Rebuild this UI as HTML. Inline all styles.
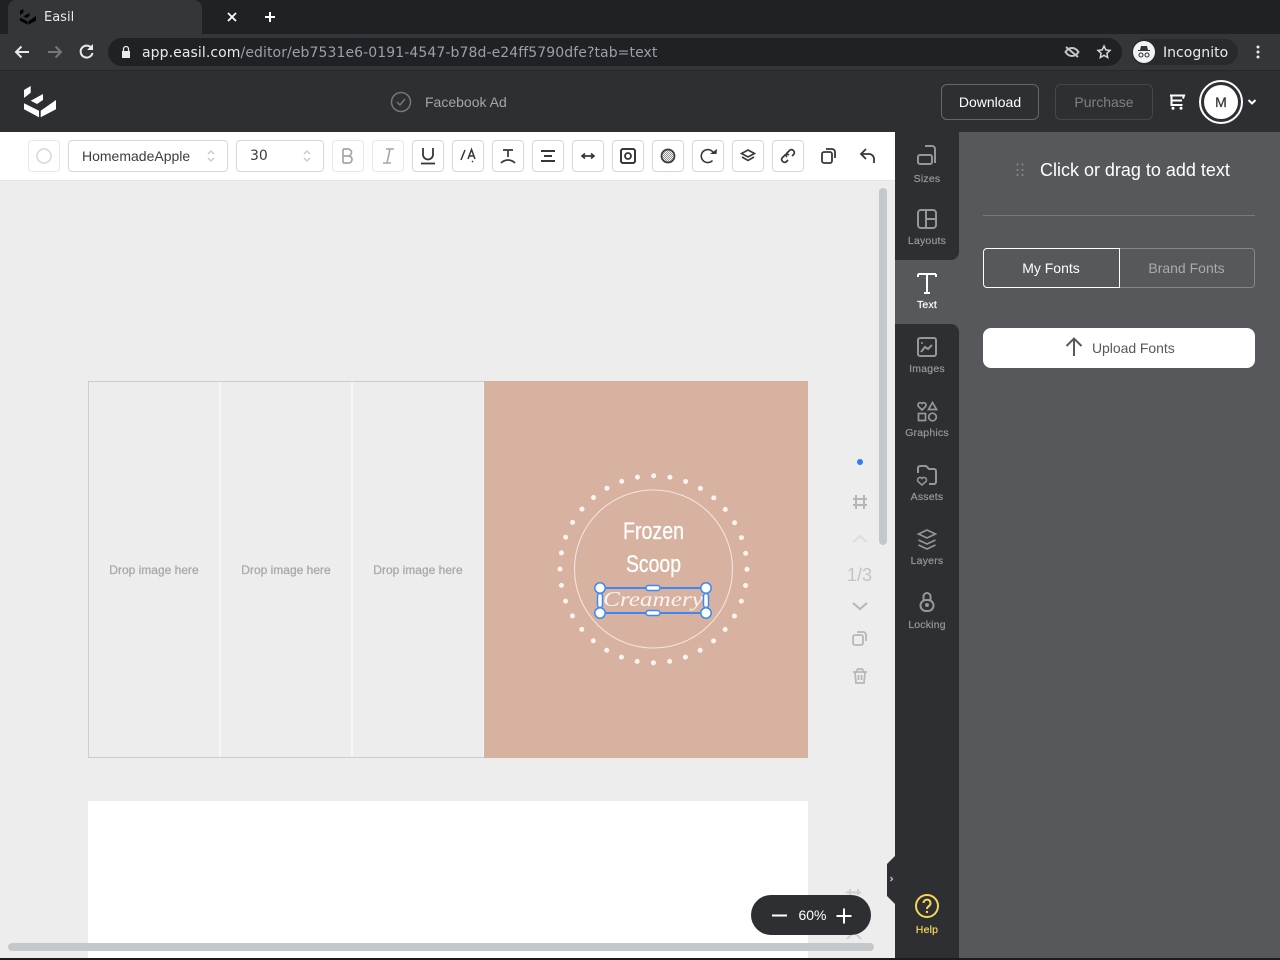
<!DOCTYPE html>
<html lang="en"><head><meta charset="utf-8"><title>Easil</title>
<style>
html,body{margin:0;padding:0;width:1280px;height:960px;overflow:hidden;background:#ededed}
body{position:relative;font-family:"Liberation Sans",Arial,sans-serif}
.b{position:absolute}
.t{position:absolute;white-space:nowrap;line-height:20px;height:20px}
.c{text-align:center}
.d{font-family:"DejaVu Sans",sans-serif}
.btn{position:absolute;top:140px;width:30px;height:30px;border:1px solid #d5d6d8;border-radius:4px;background:#fff}
.btn.o{border-color:#e6e6e6}
.side{font-size:10.5px;color:#96979b;width:64px;left:895px;text-align:center;letter-spacing:.2px;-webkit-text-stroke:.2px currentColor}
.drop{font-size:12px;color:#a9a9a9;top:560px;width:130px;text-align:center;-webkit-text-stroke:.3px #a9a9a9}
svg{position:absolute;left:0;top:0;overflow:visible}
</style></head><body>
<!-- chrome -->
<div class="b" style="left:0;top:0;width:1280px;height:34px;background:#202124"></div>
<div class="b" style="left:8px;top:0;width:194px;height:34px;background:#35363a;border-radius:8px 8px 0 0"></div>
<div class="b" style="left:0;top:34px;width:1280px;height:36px;background:#35363a"></div>
<div class="b" style="left:0;top:70px;width:1280px;height:1px;background:#26272a"></div>
<div class="b" style="left:108px;top:38px;width:1014px;height:28px;background:#202124;border-radius:14px"></div>
<div class="b" style="left:1132px;top:39px;width:106px;height:26px;background:#292a2d;border-radius:13px"></div>
<!-- header -->
<div class="b" style="left:0;top:71px;width:1280px;height:61px;background:#2e2f32"></div>
<div class="b" style="left:941px;top:84px;width:96px;height:34px;border:1px solid #66676b;border-radius:6px"></div>
<div class="b" style="left:1055px;top:84px;width:96px;height:34px;border:1px solid #46474b;border-radius:6px"></div>
<div class="b" style="left:1199px;top:80px;width:40px;height:40px;border:2px solid #fff;border-radius:50%;background:#2e2f32"></div>
<div class="b" style="left:1204px;top:85px;width:34px;height:34px;background:#fff;border-radius:50%"></div>
<!-- toolbar -->
<div class="b" style="left:0;top:132px;width:895px;height:48px;background:#fff"></div>
<div class="b" style="left:0;top:180px;width:895px;height:1px;background:#e6e6e6"></div>
<div class="btn o" style="left:28px"></div>
<div class="btn" style="left:68px;width:158px"></div>
<div class="btn" style="left:236px;width:86px"></div>
<div class="btn o" style="left:332px"></div>
<div class="btn o" style="left:372px"></div>
<div class="btn" style="left:412px"></div>
<div class="btn" style="left:452px"></div>
<div class="btn" style="left:492px"></div>
<div class="btn" style="left:532px"></div>
<div class="btn" style="left:572px"></div>
<div class="btn" style="left:612px"></div>
<div class="btn" style="left:652px"></div>
<div class="btn" style="left:692px"></div>
<div class="btn" style="left:732px"></div>
<div class="btn" style="left:772px"></div>
<!-- canvas -->
<div class="b" style="left:88px;top:381px;width:718px;height:375px;border:1px solid #cdcdcd;background:#ededed"></div>
<div class="b" style="left:219px;top:382px;width:2px;height:375px;background:#f7f7f7"></div>
<div class="b" style="left:351px;top:382px;width:2px;height:375px;background:#f7f7f7"></div>
<div class="b" style="left:483px;top:382px;width:1px;height:375px;background:#f7f7f7"></div>
<div class="b" style="left:484px;top:381px;width:324px;height:377px;background:#d8b2a0"></div>
<div class="t drop" style="left:89px;top:560px">Drop image here</div>
<div class="t drop" style="left:221px;top:560px">Drop image here</div>
<div class="t drop" style="left:353px;top:560px">Drop image here</div>
<div class="b" style="left:88px;top:801px;width:720px;height:157px;background:#fff"></div>
<div class="b" style="left:879px;top:188px;width:8px;height:357px;background:#c4c8cb;border-radius:4px"></div>
<div class="b" style="left:8px;top:943px;width:866px;height:8px;background:#c4c8cb;border-radius:4px"></div>
<!-- sidebar -->
<div class="b" style="left:895px;top:132px;width:64px;height:828px;background:#57585c"></div>
<div class="b" style="left:895px;top:132px;width:64px;height:128px;background:#2e2f33;border-radius:0 0 8px 0"></div>
<div class="b" style="left:895px;top:324px;width:64px;height:636px;background:#2e2f33;border-radius:0 8px 0 0"></div>
<div class="b" style="left:959px;top:132px;width:321px;height:828px;background:#57585c"></div>
<div class="b" style="left:983px;top:215px;width:272px;height:1px;background:#77787c"></div>
<div class="b" style="left:1120px;top:248px;width:134px;height:38px;border:1px solid #85868a;border-left:0;border-radius:0 4px 4px 0"></div>
<div class="b" style="left:983px;top:248px;width:135px;height:38px;border:1px solid #fff;border-radius:4px 0 0 4px"></div>
<div class="b" style="left:983px;top:328px;width:272px;height:40px;background:#fff;border-radius:8px"></div>
<svg width="1280" height="960" viewBox="0 0 1280 960" fill="none">
 <!-- hidden behind zoom pill -->
 <path d="M850 889v6M858 889v6M846 892.500h15" stroke="#cfd0d2" stroke-width="2"/>
 <path d="M847 939l7-7 7 7" stroke="#cfd0d2" stroke-width="2"/>
</svg>
<div class="b" style="left:751px;top:895px;width:120px;height:40px;background:#2e2f33;border-radius:20px"></div>
<div class="b" style="left:0;top:958px;width:1280px;height:2px;background:#1c1c1e"></div>

<svg width="1280" height="960" viewBox="0 0 1280 960" fill="none">
 <defs><pattern id="chk" width="2" height="2" patternUnits="userSpaceOnUse"><rect width="2" height="2" fill="#efefef"/><rect width="1" height="1" fill="#999"/><rect x="1" y="1" width="1" height="1" fill="#999"/></pattern></defs>
 <!-- favicon -->
 <g fill="#000" transform="translate(8,-34) scale(.5)"><path d="M24 90l6.700-4v6.700L24 98zM30.700 100.700L43 94v6l-6 4zM24 103.300l15 7.400v6.600l-15-8zM40.700 110.700L56 100v9.300l-15.300 8z"/></g>
 <g stroke="#fff" stroke-width="2"><path d="M228 13l8 8M236 13l-8 8" stroke-width="1.800"/><path d="M265 17h10M270 12v10"/></g>
 <!-- nav -->
 <path d="M29 52H16M21.500 46.500L16 52l5.500 5.500" stroke="#e8eaed" stroke-width="2"/>
 <path d="M48 52h13M55.500 46.500L61 52l-5.500 5.500" stroke="#76787c" stroke-width="2"/>
 <path d="M91.500 48a6 6 0 1 0 1 5" stroke="#e8eaed" stroke-width="2"/><path d="M93 44v6h-6z" fill="#e8eaed"/>
 <path d="M122 51h8v7h-8z" fill="#e8eaed"/><path d="M123.500 51v-2a2.500 2.500 0 0 1 5 0v2" stroke="#e8eaed" stroke-width="1.300"/>
 <path d="M1066 47l12 10M1065.500 52c2-3 4-4 6.500-4s4.500 1 6.500 4c-2 3-4 4-6.500 4s-4.500-1-6.500-4z" stroke="#c4c6c9" stroke-width="2"/>
 <path d="M1104 46l1.800 3.900 4.200.5-3.100 2.900.8 4.200-3.700-2.100-3.700 2.100.8-4.200-3.100-2.900 4.200-.5z" stroke="#d4d6d9" stroke-width="1.500"/>
 <circle cx="1144" cy="52" r="11" fill="#f1f3f4"/>
 <path d="M1138 50h12v1h-12zM1140 50l1-4h6l1 4z" fill="#35363a"/><circle cx="1141" cy="55" r="2" stroke="#35363a" stroke-width="1.100"/><circle cx="1147" cy="55" r="2" stroke="#35363a" stroke-width="1.100"/>
 <g fill="#e8eaed"><circle cx="1258" cy="47" r="1.500"/><circle cx="1258" cy="52" r="1.500"/><circle cx="1258" cy="57" r="1.500"/></g>
 <!-- logo -->
 <g fill="#fff"><path d="M24 90l6.700-4v6.700L24 98zM30.700 100.700L43 94v6l-6 4zM24 103.300l15 7.400v6.600l-15-8zM40.700 110.700L56 100v9.300l-15.300 8z"/></g>
 <circle cx="401" cy="102" r="9.500" stroke="#75767a" stroke-width="1.500"/><path d="M397 102l3 3 5-6" stroke="#75767a" stroke-width="1.500"/>
 <!-- cart -->
 <path d="M1170 95.500h14l-1 3M1171.500 95.500v9.500h11M1171.500 100.500h10.500" stroke="#fff" stroke-width="2"/><circle cx="1173" cy="108.300" r="1.500" fill="#fff"/><circle cx="1181" cy="108.300" r="1.500" fill="#fff"/>
 <path d="M1248.500 100l3.500 3.500 3.500-3.500" stroke="#fff" stroke-width="2"/>
 <!-- toolbar icons -->
 <circle cx="44" cy="156" r="7" stroke="#dedede" stroke-width="2"/>
 <path d="M208 154l3-3 3 3M208 158l3 3 3-3" stroke="#c6c7c9" stroke-width="1.300"/>
 <path d="M304 154l3-3 3 3M304 158l3 3 3-3" stroke="#c6c7c9" stroke-width="1.300"/>
 <path d="M343 149v14M343 149h5a3.500 3.500 0 0 1 0 7h-5M343 156h5.500a3.500 3.500 0 0 1 0 7h-5.500" stroke="#a5a6a8" stroke-width="1.700"/>
 <path d="M386 149h8M383 163h8M390 149l-3 14" stroke="#a5a6a8" stroke-width="1.600"/>
 <path d="M423 148v6.500a5 5 0 0 0 10 0V148" stroke="#36373a" stroke-width="1.800"/><path d="M421 163.500h14" stroke="#36373a" stroke-width="1.800"/>
 <path d="M461 160l4-10M468 159l3.500-9.500 3.500 9.500M469.500 156h4M472 161l1 1" stroke="#36373a" stroke-width="1.500"/>
 <path d="M503 150h10M508 150v7M501 163c4-4 10-4 14 0" stroke="#36373a" stroke-width="1.700"/>
 <path d="M541 151h14M544 156h8M541 161h14" stroke="#36373a" stroke-width="2"/>
 <path d="M582 156h12M585 153.500L582 156l3 2.500M591 153.500l3 2.500-3 2.500" stroke="#36373a" stroke-width="1.700"/>
 <rect x="621" y="149" width="14" height="14" rx="2" stroke="#36373a" stroke-width="2"/><circle cx="628" cy="156" r="3" stroke="#36373a" stroke-width="1.800"/>
 <circle cx="668" cy="156" r="6.500" fill="url(#chk)" stroke="#36373a" stroke-width="1.700"/>
 <path d="M713.500 153a6.500 6.500 0 1 0-1 7.500" stroke="#36373a" stroke-width="1.600"/><path d="M710 154h6.500l.5-5z" fill="#36373a"/>
 <path d="M748 150l6.500 3.500-6.500 3.500-6.500-3.500zM742 157l6 3.500 6-3.500" stroke="#36373a" stroke-width="1.600"/>
 <path d="M786 158l-2 2a3 3 0 0 1-4-4l3-3a3 3 0 0 1 4 0M790 154l2-2a3 3 0 0 0-4-4l-3 3a3 3 0 0 0 0 4" stroke="#36373a" stroke-width="1.700" transform="translate(2,2)"/>
 <rect x="822" y="152" width="10" height="11" rx="2" stroke="#36373a" stroke-width="1.800"/><path d="M826 149h6a3 3 0 0 1 3 3v6" stroke="#36373a" stroke-width="1.800"/>
 <path d="M861 154h8a5 5 0 0 1 5 5v4M866 149l-5 5 5 5" stroke="#36373a" stroke-width="1.800"/>
 <!-- sidebar icons -->
 <g stroke="#96979b" stroke-width="2">
  <path d="M925 146h7a3 3 0 0 1 3 3v14"/><rect x="918" y="155" width="14" height="9" rx="2"/>
  <rect x="918" y="210" width="18" height="18" rx="3"/><path d="M926 210v18M926 219h10"/>
  <rect x="918" y="338" width="18" height="18" rx="2"/><path d="M921 352l4-5 3 2 4-4"/>
  <circle cx="922" cy="343" r="1" fill="#96979b" stroke="none"/>
  <path d="M922 410.500l-3.500-3.500a2.300 2.300 0 0 1 3.500-3 2.300 2.300 0 0 1 3.500 3zM928.500 410l4-7 4 7z" stroke-width="1.700" transform="translate(0,-.5)"/>
  <rect x="918.500" y="413.500" width="7" height="7" stroke-width="1.700"/><circle cx="932.500" cy="417" r="3.800" stroke-width="1.700"/>
  <path d="M918 473v-5a2 2 0 0 1 2-2h6l3 3h5a2 2 0 0 1 2 2v11a2 2 0 0 1-2 2h-5"/>
  <path d="M922 485l-4-3.500a2.300 2.300 0 0 1 4-3 2.300 2.300 0 0 1 4 3z" stroke-width="1.500"/>
  <path d="M927 530l8.500 4-8.500 4-8.500-4z" stroke-width="1.600"/><path d="M918.500 540l8.500 4 8.500-4M918.500 545l8.500 4 8.500-4" stroke-width="1.600"/>
  <rect x="920.500" y="600" width="13" height="11" rx="5.500"/><path d="M923.500 600v-3.500a3.500 3.500 0 0 1 7 0v3.500"/><circle cx="927" cy="605" r="1" fill="#96979b"/>
 </g>
 <path d="M918 274h18M927 274v19M924 293h6M918 274v3M936 274v3" stroke="#fff" stroke-width="2"/>
 <!-- side collapse tab -->
 <path d="M895 856l-8 8v32l8 8z" fill="#2e2f33"/><path d="M890.500 877l2 2-2 2" stroke="#b8b9bb" stroke-width="1.400"/>
 <circle cx="927" cy="906" r="11" stroke="#f5d657" stroke-width="2"/>
 <path d="M923.500 903a3.500 3.500 0 1 1 5.500 3c-1.500 1-2 1.500-2 3" stroke="#f5d657" stroke-width="2"/><circle cx="927" cy="912" r="1.200" fill="#f5d657"/>
 <!-- drag dots -->
 <g fill="#8a8b8f"><circle cx="1017.500" cy="164.500" r="1"/><circle cx="1022.500" cy="164.500" r="1"/><circle cx="1017.500" cy="170" r="1"/><circle cx="1022.500" cy="170" r="1"/><circle cx="1017.500" cy="175" r="1"/><circle cx="1022.500" cy="175" r="1"/></g>
 <path d="M1074 356v-17M1066.500 346l7.500-7.500 7.500 7.500" stroke="#57585c" stroke-width="2"/>
 <!-- artwork -->
 <circle cx="653.500" cy="569.300" r="93.500" stroke="#fff" stroke-opacity=".85" stroke-width="5" stroke-linecap="round" stroke-dasharray="0 16.320"/>
 <circle cx="653.500" cy="569" r="79" stroke="#fff" stroke-opacity=".65" stroke-width="1.100"/>
 <text x="623" y="539" font-family="'Liberation Sans Narrow','Liberation Sans',sans-serif" font-size="24" fill="#fff" stroke="#fff" stroke-width=".3" textLength="61" lengthAdjust="spacingAndGlyphs">Frozen</text>
 <text x="626" y="572" font-family="'Liberation Sans Narrow','Liberation Sans',sans-serif" font-size="24" fill="#fff" stroke="#fff" stroke-width=".3" textLength="55" lengthAdjust="spacingAndGlyphs">Scoop</text>
 <text x="603" y="606" font-family="'Liberation Serif',serif" font-style="italic" font-size="21" fill="#fff" fill-opacity=".85" textLength="100" lengthAdjust="spacingAndGlyphs">Creamery</text>
 <rect x="600" y="588" width="106" height="25" stroke="#3d88f5" stroke-width="2"/>
 <g fill="#fff" stroke="#3d88f5" stroke-width="1.500">
  <rect x="646" y="585.500" width="14" height="5" rx="2.500"/><rect x="646" y="610.500" width="14" height="5" rx="2.500"/>
  <rect x="597.500" y="593.500" width="5" height="14" rx="2.500"/><rect x="703.500" y="593.500" width="5" height="14" rx="2.500"/>
  <circle cx="600" cy="588" r="5.200"/><circle cx="706" cy="588" r="5.200"/><circle cx="600" cy="613" r="5.200"/><circle cx="706" cy="613" r="5.200"/>
 </g>
 <!-- page controls -->
 <circle cx="860" cy="462" r="3" fill="#2f7cf6"/>
 <path d="M856 495v14M864 495v14M853 499h14M853 505h14" stroke="#b4b6b9" stroke-width="2"/>
 <path d="M853 542l7-6 7 6" stroke="#dcdddf" stroke-width="2"/>
 <path d="M853 603l7 6 7-6" stroke="#b4b6b9" stroke-width="2"/>
 <rect x="853" y="635" width="10" height="10" rx="2" stroke="#b4b6b9" stroke-width="1.800"/><path d="M857 632h6a3 3 0 0 1 3 3v6" stroke="#b4b6b9" stroke-width="1.800"/>
 <path d="M853 672h14M857 672v-1.500a1.500 1.500 0 0 1 1.500-1.500h3a1.500 1.500 0 0 1 1.500 1.500V672M855 672l1 11h8l1-11M858.500 675v5M861.500 675v5" stroke="#b4b6b9" stroke-width="1.700"/>
 <!-- zoom -->
 <path d="M772 915.500h15M836.500 916h15M844 908.500v15" stroke="#fff" stroke-width="2"/>
</svg>

<!-- text -->
<div class="t d" style="left:44px;top:8px;font-size:13px;color:#e8eaed">Easil</div>
<div class="t d" style="left:142px;top:43px;font-size:14px;letter-spacing:.085px;color:#e8eaed">app.easil.com<span style="color:#9aa0a6">/editor/eb7531e6-0191-4547-b78d-e24ff5790dfe?tab=text</span></div>
<div class="t d" style="left:1163px;top:43px;font-size:14px;letter-spacing:.03px;color:#e8eaed">Incognito</div>
<div class="t" style="left:425px;top:92px;font-size:14px;color:#a5a6a9">Facebook Ad</div>
<div class="t c" style="left:941px;top:92px;width:98px;font-size:14px;color:#fff">Download</div>
<div class="t c" style="left:1055px;top:92px;width:98px;font-size:14px;color:#808185">Purchase</div>
<div class="t c" style="left:1204px;top:92px;width:34px;font-size:14px;color:#2e2f32;-webkit-text-stroke:.2px #2e2f32">M</div>
<div class="t" style="left:82px;top:146px;font-size:14px;color:#3c3d40">HomemadeApple</div>
<div class="t d" style="left:250px;top:146px;font-size:14px;color:#3c3d40">30</div>
<div class="t side" style="top:169px">Sizes</div>
<div class="t side" style="top:231px">Layouts</div>
<div class="t side" style="top:295px;color:#fff">Text</div>
<div class="t side" style="top:359px">Images</div>
<div class="t side" style="top:423px">Graphics</div>
<div class="t side" style="top:487px">Assets</div>
<div class="t side" style="top:551px">Layers</div>
<div class="t side" style="top:615px">Locking</div>
<div class="t side" style="top:920px;color:#f5d657">Help</div>
<div class="t" style="left:1040px;top:160px;font-size:18px;color:#fff;letter-spacing:-.01px">Click or drag to add text</div>
<div class="t c" style="left:983px;top:258px;width:136px;font-size:14px;color:#fff">My Fonts</div>
<div class="t c" style="left:1119px;top:258px;width:135px;font-size:14px;color:#a9aaad">Brand Fonts</div>
<div class="t" style="left:1092px;top:338px;font-size:14px;letter-spacing:-.05px;color:#57585c">Upload Fonts</div>
<div class="t" style="left:847px;top:565px;font-size:18px;color:#c2c4c6">1/3</div>
<div class="t c" style="left:793px;top:905px;width:39px;font-size:14px;color:#fff">60%</div>
</body></html>
